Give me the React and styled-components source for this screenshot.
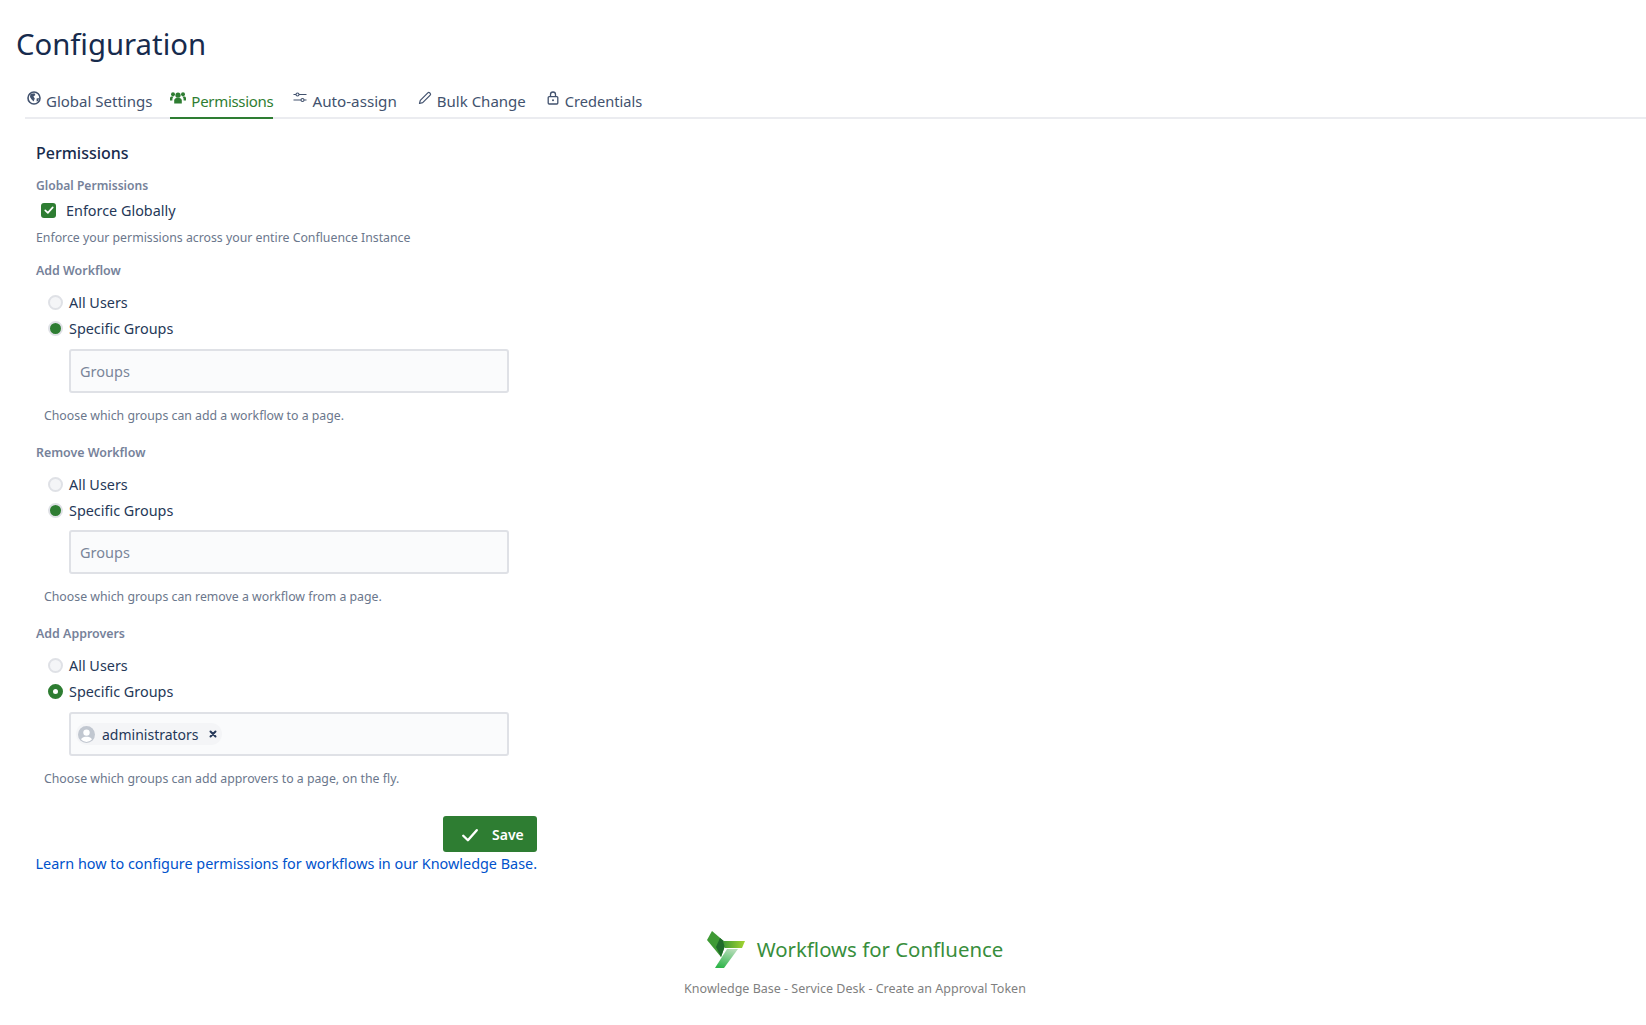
import styled, { createGlobalStyle } from "styled-components"

const GlobalStyle = createGlobalStyle`
  html, body { margin: 0; padding: 0; background: #fff; }
  body { font-family: "Noto Sans", "Open Sans", sans-serif; color: #172b4d; }
  * { box-sizing: border-box; }
`

const green = "#2e7d32"

const Page = styled.div`
  width: 1646px;
  height: 1025px;
  overflow: hidden;
  padding: 21px 0 0 16px;
`
const Heading = styled.h1`
  margin: 0;
  height: 47px;
  font-size: 29.3px;
  line-height: 46px;
  font-weight: 400;
  color: #172b4d;
`
const TabBar = styled.div`
  display: flex;
  margin: 16px 0 0 9px;
  height: 35px;
  padding-left: 2px;
  border-bottom: 2px solid #ebecf0;
`
const Tab = styled.div`
  display: flex;
  align-items: flex-start;
  height: 35px;
  margin-right: ${p => p.$gap || 20}px;
  padding-top: 7px;
  gap: 5px;
  font-size: ${p => p.$size || 15}px;
  letter-spacing: ${p => (p.$active ? "-0.3px" : "0")};
  line-height: 20px;
  color: ${p => (p.$active ? green : "#42526e")};
  border-bottom: 2px solid ${p => (p.$active ? green : "transparent")};
  svg { flex: none; }
`
const Body = styled.div`
  padding: 22px 0 0 20px;
`
const SectionTitle = styled.h2`
  margin: 0;
  font-size: 16px;
  line-height: 24px;
  font-weight: 500;
  color: #172b4d;
`
const FieldLabel = styled.div`
  font-size: ${p => p.$size || 12.4}px;
  line-height: 18px;
  font-weight: 600;
  color: #76829a;
  margin-top: ${p => p.$top || 0}px;
`
const CheckRow = styled.div`
  display: flex;
  align-items: center;
  gap: 10px;
  height: 24px;
  margin: 3px 0 0 5px;
  font-size: 14.4px;
  color: #253858;
`
const CheckBox = styled.span`
  width: 15px;
  height: 15px;
  border-radius: 3px;
  background: ${green};
  display: flex;
  align-items: center;
  justify-content: center;
`
const Help = styled.div`
  font-size: 12.3px;
  line-height: 18px;
  color: #6b778c;
  margin-top: ${p => p.$top || 0}px;
  padding-left: ${p => p.$indent || 0}px;
`
const RadioGroup = styled.div`
  margin: 9px 0 0 12px;
`
const RadioRow = styled.div`
  display: flex;
  align-items: center;
  gap: 6px;
  height: 26px;
  font-size: 14.4px;
  color: #253858;
`
const Radio = styled.span`
  width: 15px;
  height: 15px;
  border-radius: 50%;
  flex: none;
  display: flex;
  align-items: center;
  justify-content: center;
  background: ${p => (p.$state ? green : "#f4f5f7")};
  border: 2px solid ${p => (p.$state === "dot" ? green : "#dfe1e6")};
  &::after {
    content: "";
    display: ${p => (p.$state === "dot" ? "block" : "none")};
    width: 5px;
    height: 5px;
    border-radius: 50%;
    background: #fff;
  }
`
const GroupInput = styled.div`
  display: flex;
  align-items: center;
  width: 440px;
  height: 44px;
  margin: ${p => p.$top || 8}px 0 0 33px;
  padding-left: ${p => (p.$filled ? 5 : 9)}px;
  background: #fafbfc;
  border: 2px solid #dfe1e6;
  border-radius: 3px;
  font-size: 14.5px;
  color: #7a869a;
`
const Tag = styled.div`
  display: flex;
  align-items: center;
  height: 22px;
  padding: 0 5px 0 2px;
  gap: 7px;
  border-radius: 11px;
  background: #f4f5f7;
  font-size: 14px;
  color: #253858;
`
const Avatar = styled.span`
  width: 17px;
  height: 17px;
  flex: none;
`
const Remove = styled.span`
  display: flex;
  margin-left: 3px;
`
const Actions = styled.div`
  width: 501px;
  display: flex;
  flex-direction: column;
  align-items: flex-end;
  margin-top: 28px;
`
const SaveButton = styled.button`
  display: flex;
  align-items: center;
  width: 94px;
  height: 36px;
  padding: 1px 0 0 18px;
  gap: 13px;
  border: 0;
  border-radius: 3px;
  background: ${green};
  color: #fff;
  font: 600 14px "Noto Sans", sans-serif;
`
const HelpLink = styled.a`
  display: block;
  font-size: 14.4px;
  line-height: 20px;
  margin-top: 2px;
  color: #0052cc;
  white-space: nowrap;
`
const Footer = styled.div`
  display: flex;
  flex-direction: column;
  align-items: center;
  width: 1678px;
  margin-top: 55px;
`
const Brand = styled.div`
  display: flex;
  align-items: center;
  gap: 12px;
  height: 40px;
  font-size: 20.4px;
  color: #388e3c;
`
const FooterLinks = styled.div`
  margin-top: 11px;
  font-size: 12.5px;
  line-height: 18px;
  color: #7f7f7f;
`

const GlobeIcon = () => (
  <svg width="14" height="14" viewBox="0 0 14 14">
    <circle cx="7" cy="7" r="6" fill="none" stroke="#42526e" strokeWidth="1.6" />
    <path d="M3.4 3 7.4 2.2 8.4 4 6.4 5.6 7.8 7.4 6.6 10.6 4.6 8.4 3 6ZM9.6 7.6l2.4-.6-.8 3-1.6.4Z" fill="#42526e" />
  </svg>
)
const UsersIcon = () => (
  <svg width="16" height="14" viewBox="0 0 16 14" fill={green}>
    <circle cx="8" cy="4.2" r="2.6" />
    <circle cx="3" cy="3.2" r="2" />
    <circle cx="13" cy="3.2" r="2" />
    <path d="M4.2 12.4V9.4c0-1.4 1.2-2.4 2.4-2.4h2.8c1.2 0 2.4 1 2.4 2.4v3Z" />
    <path d="M0 9.4V7.2C0 6.2.8 5.6 1.6 5.6h2.2c-1.2 1-1.4 2-1.4 3.8ZM16 9.4V7.2c0-1-.8-1.6-1.6-1.6h-2.2c1.2 1 1.4 2 1.4 3.8Z" />
  </svg>
)
const SlidersIcon = () => (
  <svg width="14" height="14" viewBox="0 0 14 14" fill="none" stroke="#42526e" strokeWidth="1.1">
    <path d="M0.5 3.5H3M6 3.5H13.5M0.5 9H8M11 9H13.5" />
    <circle cx="4.5" cy="3.5" r="1.5" />
    <circle cx="9.5" cy="9" r="1.5" />
  </svg>
)
const PencilIcon = () => (
  <svg width="14" height="14" viewBox="0 0 14 14" fill="none" stroke="#42526e" strokeWidth="1.2" strokeLinejoin="round">
    <path d="M1.5 12.5 2.3 9.3 9.8 1.8a1.3 1.3 0 0 1 1.8 0l.6.6a1.3 1.3 0 0 1 0 1.8L4.7 11.7Z" />
  </svg>
)
const LockIcon = () => (
  <svg width="14" height="14" viewBox="0 0 14 14" fill="none" stroke="#42526e" strokeWidth="1.3">
    <rect x="2.2" y="5.6" width="9.6" height="7.4" rx="1" />
    <path d="M4.5 5.6V3.5a2.5 2.5 0 0 1 5 0v2.1" />
    <circle cx="7" cy="9.2" r="1" fill="#42526e" stroke="none" />
  </svg>
)
const CheckMark = ({ size = 11, width = 2 }) => (
  <svg width={size} height={size} viewBox="0 0 12 12" fill="none" stroke="#fff" strokeWidth={width} strokeLinecap="round" strokeLinejoin="round">
    <path d="M1.5 6.5 4.6 9.5 10.5 2.8" />
  </svg>
)
const PersonIcon = () => (
  <Avatar>
    <svg width="17" height="17" viewBox="0 0 16 16">
      <circle cx="8" cy="8" r="8" fill="#c1c7d0" />
      <circle cx="8" cy="6.2" r="3" fill="#fff" />
      <path d="M2.8 12.4C4 10.4 6 10 8 10s4 .4 5.2 2.4A7 7 0 0 1 8 15a7 7 0 0 1-5.2-2.6Z" fill="#fff" />
    </svg>
  </Avatar>
)
const CloseIcon = () => (
  <Remove>
    <svg width="8" height="8" viewBox="0 0 8 8" stroke="#253858" strokeWidth="2" strokeLinecap="round">
      <path d="M1.5 1.5 6.5 6.5M6.5 1.5 1.5 6.5" />
    </svg>
  </Remove>
)
const Logo = () => (
  <svg width="38" height="37" viewBox="0 0 38 37">
    <defs>
      <linearGradient id="barFill" x1="0" y1="0" x2="1" y2="0">
        <stop offset="0" stopColor="#3f9a35" />
        <stop offset="1" stopColor="#a4d531" />
      </linearGradient>
      <linearGradient id="stemFill" x1="0.7" y1="0" x2="0.3" y2="1">
        <stop offset="0" stopColor="#b5dcb8" />
        <stop offset="1" stopColor="#2fb54a" />
      </linearGradient>
    </defs>
    <path d="M5 0 0 9 14 26 19 12Z" fill="#3f9a35" />
    <path d="M9 16 14 26 19 12 13 7Z" fill="#1f6b2a" />
    <path d="M16 10H38L35 17H18Z" fill="url(#barFill)" />
    <path d="M20 18H31L17 37H8Z" fill="url(#stemFill)" />
  </svg>
)

const PermissionField = ({ title, top, filled, help, state, inputTop }) => (
  <>
    <FieldLabel $top={top}>{title}</FieldLabel>
    <RadioGroup>
      <RadioRow><Radio />All Users</RadioRow>
      <RadioRow><Radio $state={state} />Specific Groups</RadioRow>
    </RadioGroup>
    <GroupInput $filled={filled} $top={inputTop}>
      {filled ? (
        <Tag><PersonIcon />administrators<CloseIcon /></Tag>
      ) : "Groups"}
    </GroupInput>
    <Help $top={14} $indent={8}>{help}</Help>
  </>
)

const App = () => {
  return (
    <Page>
      <GlobalStyle />
      <Heading>Configuration</Heading>
      <TabBar>
        <Tab $gap={18}><GlobeIcon />Global Settings</Tab>
        <Tab $active $gap={20}><UsersIcon />Permissions</Tab>
        <Tab $gap={21} $size={15.2}><SlidersIcon />Auto-assign</Tab>
        <Tab><PencilIcon />Bulk Change</Tab>
        <Tab $size={14.6}><LockIcon />Credentials</Tab>
      </TabBar>
      <Body>
        <SectionTitle>Permissions</SectionTitle>
        <FieldLabel $top={12} $size={12.1}>Global Permissions</FieldLabel>
        <CheckRow>
          <CheckBox><CheckMark size={10} /></CheckBox>
          Enforce Globally
        </CheckRow>
        <Help $top={7}>Enforce your permissions across your entire Confluence Instance</Help>
        <PermissionField title="Add Workflow" top={15} state="on" help="Choose which groups can add a workflow to a page." />
        <PermissionField title="Remove Workflow" top={19} state="on" inputTop={7} help="Choose which groups can remove a workflow from a page." />
        <PermissionField title="Add Approvers" top={19} state="dot" filled help="Choose which groups can add approvers to a page, on the fly." />
        <Actions>
          <SaveButton><CheckMark size={18} width={1.6} />Save</SaveButton>
          <HelpLink>Learn how to configure permissions for workflows in our Knowledge Base.</HelpLink>
        </Actions>
      </Body>
      <Footer>
        <Brand><Logo />Workflows for Confluence</Brand>
        <FooterLinks>Knowledge Base - Service Desk - Create an Approval Token</FooterLinks>
      </Footer>
    </Page>
  )
}

export default App
